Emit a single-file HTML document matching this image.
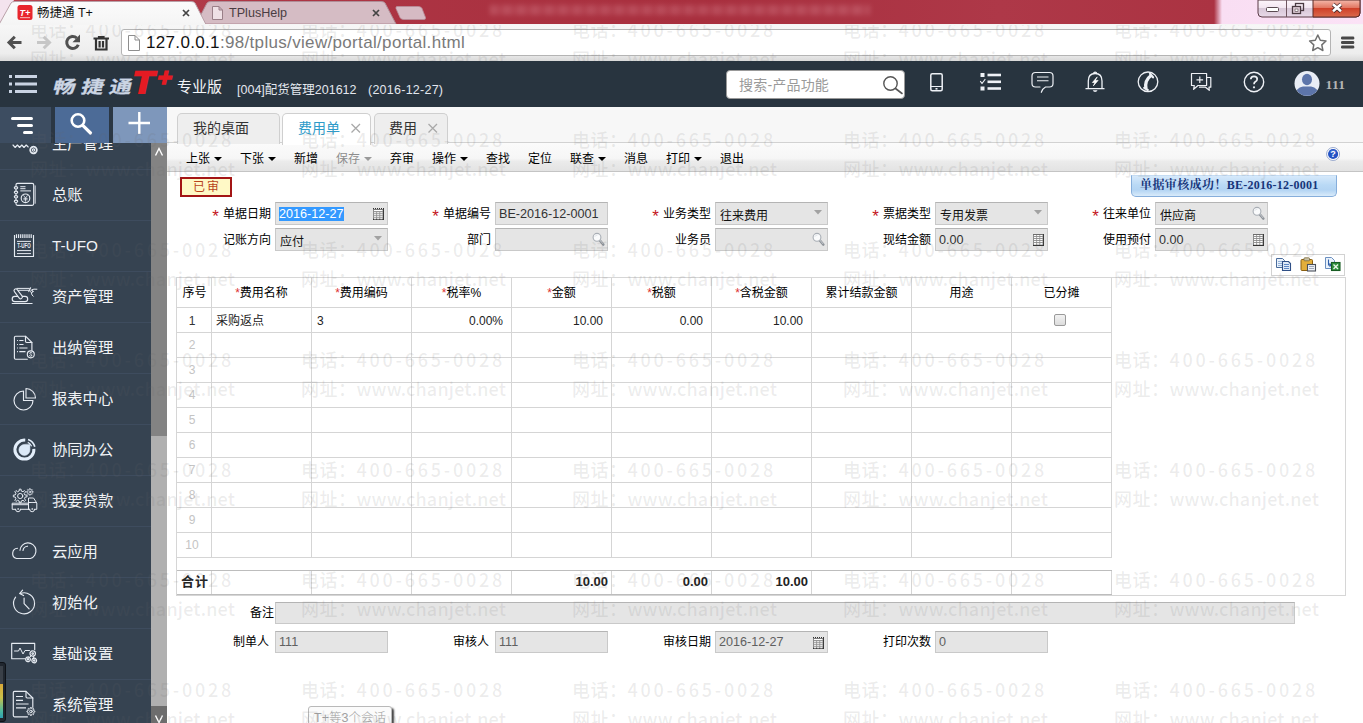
<!DOCTYPE html>
<html lang="zh-CN">
<head>
<meta charset="utf-8">
<title>畅捷通 T+</title>
<style>
*{box-sizing:border-box;margin:0;padding:0}
html,body{width:1363px;height:723px;overflow:hidden;background:#fff}
body{position:relative;font-family:"Liberation Sans","Noto Sans CJK SC",sans-serif;font-size:12px;color:#000}
.abs{position:absolute}
svg{display:block;overflow:visible}
/* ---------- browser chrome ---------- */
#titlebar{z-index:10;left:0;top:0;width:1363px;height:24px;background:linear-gradient(90deg,#b7434f 0,#ad3544 300px,#a82f3e 700px,#ae3848 1000px,#ab3342 1214px,#f9def3 1222px,#fbe2f6 1363px)}
#navbar{left:0;top:24px;width:1363px;height:37px;background:linear-gradient(#f7f7f7,#ededed 80%,#d9d9d9)}
#urlbox{left:121px;top:29px;width:1210px;height:27px;background:#fff;border:1px solid #b4b4b4;border-radius:3px}
#url{left:146px;top:31px;font-size:17px;line-height:23px;color:#7a7a7a;white-space:nowrap;letter-spacing:.33px}
#url b{font-weight:normal;color:#111}
.btab{font-size:13px;line-height:24px;white-space:nowrap}
/* ---------- app header ---------- */
#apphead{z-index:10;left:0;top:61px;width:1363px;height:46px;background:#28343f}
#apphead .t{color:#e4e8ee;white-space:nowrap}
#search{z-index:11;left:726px;top:70px;width:179px;height:29px;background:#fff;border:1px solid #999;border-radius:4px}
/* ---------- sidebar ---------- */
#side{left:0;top:107px;width:151px;height:616px;background:#364351;overflow:hidden}
#sidescroll{left:151px;top:143px;width:16px;height:580px;background:#b0b0b0}
#sidethumb{left:151px;top:143px;width:16px;height:293px;background:#838383}
.sb{position:absolute;top:107px;height:36px}
.mi{position:absolute;left:0;width:151px;height:51px;border-top:1px solid #3e4c5e}
.mi span{position:absolute;left:52px;top:13px;font-size:15.300px;line-height:24px;color:#f1f3f6;white-space:nowrap}
.mi svg{position:absolute;left:10px;top:11px}
/* ---------- content ---------- */
#tabstrip{left:167px;top:107px;width:1196px;height:36px;background:#f7f7f7}
.ptab{position:absolute;top:113px;height:31px;border:1px solid #cfcfcf;border-bottom:none;border-radius:5px 5px 0 0;background:#eeeeee;font-size:14px;line-height:29px;color:#333;white-space:nowrap}
#menubar{left:167px;top:142px;width:1196px;height:30px;background:linear-gradient(#fbfbfb 0,#f6f6f6 55%,#ebebeb 66%,#e3e3e3 100%);border-top:1px solid #d2d2d2;border-bottom:1px solid #c4c4c4}
.m{position:absolute;top:150.500px;font-size:12px;line-height:16px;color:#000;white-space:nowrap}
.m i{display:inline-block;width:0;height:0;border:4px solid transparent;border-top:4px solid #000;border-bottom:0;margin-left:4px;vertical-align:2px}
.lbl{position:absolute;font-size:12px;line-height:16px;white-space:nowrap;text-align:right;width:90px}
.lbl em{font-style:normal;color:#c4161c;margin-right:4px;font-size:17px;line-height:12px;position:relative;top:3.500px;font-weight:normal}
.fld{position:absolute;height:23px;width:113px;background:#e5e5e5;border:1px solid #c9c9c9;border-top-color:#b4b4b4;font-size:12px;line-height:20px;padding-left:4px;padding-top:3px;white-space:nowrap;color:#111}
.fld.ln{font-size:12.600px;color:#333;line-height:22px;padding-top:0;padding-left:3px}
#grid{left:176px;top:277px;width:1170px;height:319px;border:1px solid #d6d6d6;background:#fff}
.vl{position:absolute;width:1px;background:#d5d5d5}
.hl{position:absolute;height:1px;background:#d5d5d5}
.th{position:absolute;top:285px;font-size:12px;line-height:16px;text-align:center;white-space:nowrap}
.th em{font-style:normal;color:#d33}
.td{position:absolute;font-size:12px;line-height:16px;white-space:nowrap;color:#222}
.rn{position:absolute;left:176px;width:32px;text-align:center;font-size:12px;line-height:16px;color:#c4c4c4}
/* watermark */
.wm{position:absolute;font-family:"Noto Sans CJK SC",sans-serif;font-weight:500;font-size:18px;line-height:22px;color:rgba(105,105,105,.12);white-space:nowrap;letter-spacing:.5px;pointer-events:none}
.wm b{font-weight:inherit;letter-spacing:2.75px}
.wm u{text-decoration:none;letter-spacing:.18px}
</style>
</head>
<body>
<!-- browser chrome -->
<div id="titlebar" class="abs"></div>
<div id="navbar" class="abs"></div>
<div id="urlbox" class="abs"></div>
<div id="url" class="abs"><b>127.0.0.1</b>:98/tplus/view/portal/portal.html</div>


<svg class="abs" style="left:0;top:0;z-index:11" width="1363" height="61" viewBox="0 0 1363 61">
  <defs>
    <linearGradient id="tabg" x1="0" y1="0" x2="0" y2="1"><stop offset="0" stop-color="#fbfbfb"/><stop offset="1" stop-color="#f5f5f5"/></linearGradient>
    <linearGradient id="redbtn" x1="0" y1="0" x2="0" y2="1"><stop offset="0" stop-color="#f4b9ab"/><stop offset=".45" stop-color="#e27863"/><stop offset=".5" stop-color="#cf4129"/><stop offset="1" stop-color="#da694c"/></linearGradient>
    <linearGradient id="greybtn" x1="0" y1="0" x2="0" y2="1"><stop offset="0" stop-color="#fdf5fb"/><stop offset=".45" stop-color="#f3e6f1"/><stop offset=".5" stop-color="#d8c7d8"/><stop offset="1" stop-color="#e8d9e8"/></linearGradient>
  </defs>
  <!-- left frame sliver -->
  <path d="M0 0H14L2 24H0Z" fill="#f3e3ee"/>
  <!-- inactive tab 2 -->
  <path d="M196 24 L207 3 Q208 1.500 211 1.500 H381 Q384 1.500 385 3 L396 24 Z" fill="#d5bcc4" stroke="#b08d97" stroke-width="1"/>
  <!-- new tab button -->
  <path d="M397 6.500 H418.500 Q421 6.500 422 8.500 L425.500 17.500 Q426 19.500 424 19.500 H403.500 Q401 19.500 400 17.500 L396 8.500 Q395.500 6.500 397 6.500Z" fill="#d6bac3" stroke="#b88f9b" stroke-width=".8"/>
  <!-- active tab 1 -->
  <path d="M-1 24.500 L11 3 Q12 1.500 15 1.500 H191 Q194 1.500 195 3 L206 24.500 Z" fill="url(#tabg)" stroke="#b9a0a8" stroke-width="1"/>
  <rect x="0" y="24" width="1363" height="1" fill="#f5f5f5"/>
  <!-- favicon -->
  <rect x="17.500" y="5" width="15" height="15" rx="2.500" fill="#e8262d"/>
  <text x="25" y="15.500" font-family="Liberation Sans, sans-serif" font-size="9" font-weight="bold" font-style="italic" fill="#fff" text-anchor="middle">T+</text>
  <rect x="20" y="17" width="10" height="1.200" fill="#f6a3a3"/>
  <text x="37" y="17" font-family="Liberation Sans, Noto Sans CJK SC, sans-serif" font-size="12.500" fill="#111">畅捷通 T+</text>
  <path d="M183 10 L189 16 M189 10 L183 16" stroke="#444" stroke-width="1.700"/>
  <!-- tab2 content -->
  <path d="M212.500 6.500 H219 L222.500 10 V19.500 H212.500 Z M219 6.500 V10 H222.500" fill="#efe0e5" stroke="#9a7f88" stroke-width="1"/>
  <text x="229" y="17" font-family="Liberation Sans, sans-serif" font-size="12.600" fill="#4a3c42">TPlusHelp</text>
  <path d="M373 10 L379 16 M379 10 L373 16" stroke="#444" stroke-width="1.700"/>
  <!-- window controls -->
  <g>
    <path d="M1258 0 H1360 V13 Q1360 17 1356 17 H1262 Q1258 17 1258 13 Z" fill="url(#greybtn)" stroke="#5a3a46" stroke-width="1"/>
    <path d="M1313 0 H1360 V13 Q1360 17 1356 17 H1313 Z" fill="url(#redbtn)" stroke="#5a2a26" stroke-width="1"/>
    <path d="M1286.500 0 V17" stroke="#6f5560" stroke-width="1"/>
    <rect x="1266.500" y="7.500" width="12" height="4" rx="1" fill="#fff" stroke="#5a4a52" stroke-width="1"/>
    <rect x="1295.500" y="3.500" width="8" height="7" fill="none" stroke="#4a3a42" stroke-width="1.300"/>
    <rect x="1292.500" y="6.500" width="8" height="7" fill="#e4d2dc" stroke="#4a3a42" stroke-width="1.300"/>
    <rect x="1295" y="9" width="3" height="2.500" fill="#fff" stroke="#4a3a42" stroke-width=".6"/>
    <path d="M1333 4.300 L1341 11.300 M1341 4.300 L1333 11.300" stroke="#4a2a28" stroke-width="4.200" stroke-linecap="butt"/>
    <path d="M1333 4.300 L1341 11.300 M1341 4.300 L1333 11.300" stroke="#fff" stroke-width="2.600" stroke-linecap="butt"/>
  </g>
  <!-- nav icons -->
  <g fill="none" stroke="#505050" stroke-width="3" stroke-linejoin="miter">
    <path d="M21.500 42.500 H10 M14.800 36.800 L9 42.500 L14.800 48.200"/>
  </g>
  <g fill="none" stroke="#c6c6c6" stroke-width="3">
    <path d="M37 42.500 H48.500 M43.700 36.800 L49.500 42.500 L43.700 48.200"/>
  </g>
  <path d="M76.800 38 A6 6 0 1 0 78.300 44.700" fill="none" stroke="#505050" stroke-width="3"/>
  <path d="M80 34.500 V42.300 H72.500 Z" fill="#505050"/>
  <g fill="none" stroke="#333" stroke-width="2.200">
    <path d="M93.500 38.500 H109 M99 38 V37.200 H103.500 V38"/>
    <path d="M96 39 V49.500 H106.500 V39 M99.600 41 V47.500 M103 41 V47.500"/>
  </g>
  <!-- page icon in url -->
  <path d="M128.500 35.500 H135 L139.500 40 V50.500 H128.500 Z M135 35.500 V40 H139.500" fill="#fff" stroke="#8e8e8e" stroke-width="1"/>
  <!-- star -->
  <path d="M1317.800 35 L1320.300 40.300 L1326 41 L1321.800 44.900 L1322.900 50.500 L1317.800 47.700 L1312.700 50.500 L1313.800 44.900 L1309.600 41 L1315.300 40.300 Z" fill="#fff" stroke="#707070" stroke-width="1.500" stroke-linejoin="round"/>
  <!-- hamburger -->
  <g fill="#484848"><rect x="1341" y="36.500" width="13.300" height="3" rx="1.300"/><rect x="1341" y="41" width="13.300" height="3" rx="1.300"/><rect x="1341" y="45.600" width="13.300" height="3" rx="1.300"/></g>
</svg>

<div class="abs" style="z-index:11;left:490px;top:5px;width:380px;height:10px;filter:blur(2.5px);opacity:.4;background:repeating-linear-gradient(90deg,rgba(255,200,210,.55) 0,rgba(255,200,210,.35) 9px,rgba(255,200,210,.1) 11px,rgba(255,200,210,.5) 14px)"></div>
<!-- app header -->
<div id="apphead" class="abs"></div>

<svg class="abs" style="left:0;top:61px;z-index:11" width="1363" height="46" viewBox="0 61 1363 46">
  <!-- list icon -->
  <g fill="#c9d3e3">
    <rect x="9" y="75" width="3" height="3"/><rect x="15" y="75" width="22" height="3"/>
    <rect x="9" y="82.500" width="3" height="3"/><rect x="15" y="82.500" width="22" height="3"/>
    <rect x="9" y="90" width="3" height="3"/><rect x="15" y="90" width="22" height="3"/>
  </g>
  <g transform="translate(52 92.500) skewX(-14) scale(1.28 1)"><text x="0" y="0" font-family="Liberation Sans, Noto Sans CJK SC, sans-serif" font-size="17.500" font-weight="bold" fill="#cbd5e4" stroke="#cbd5e4" stroke-width=".3" letter-spacing="4.500">畅捷通</text></g>
  <g transform="translate(131 93) skewX(-12) scale(1.12 1)"><text x="0" y="0" font-family="Liberation Sans, sans-serif" font-size="31" font-weight="bold" fill="#e41b23" stroke="#e41b23" stroke-width="2">T</text></g>
  <g transform="translate(156 86) skewX(-12)"><text x="0" y="0" font-family="Liberation Sans, sans-serif" font-size="25" font-weight="bold" fill="#e41b23" stroke="#e41b23" stroke-width="1.600">+</text></g>
  <text x="177" y="91.500" font-family="Liberation Sans, Noto Sans CJK SC, sans-serif" font-size="15" fill="#f2f4f8">专业版</text>
  <text x="237" y="94" font-family="Liberation Sans, Noto Sans CJK SC, sans-serif" font-size="12.500" fill="#e3e7ee">[004]配货管理201612</text>
  <text x="368" y="94" font-family="Liberation Sans, Noto Sans CJK SC, sans-serif" font-size="12.500" fill="#e3e7ee" letter-spacing=".25">(2016-12-27)</text>
</svg>
<div id="search" class="abs"></div>


<div class="abs" style="z-index:12;left:739px;top:74px;font-size:14px;line-height:22px;color:#9a9a9a;white-space:nowrap;letter-spacing:.2px">搜索-产品功能</div>
<svg class="abs" style="left:700px;top:61px;z-index:12" width="663" height="46" viewBox="700 61 663 46" fill="none" stroke="#eef1f6" stroke-width="1.500" stroke-linecap="round" stroke-linejoin="round">
  <!-- magnifier -->
  <circle cx="890.500" cy="83.500" r="6.700" stroke="#555" stroke-width="1.400"/>
  <path d="M895.500 88.500 L902 93.500" stroke="#555" stroke-width="1.600"/>
  <!-- phone -->
  <rect x="930.800" y="73.800" width="11.400" height="17" rx="1.500"/>
  <path d="M931 86.500 H942" stroke-width="1.200"/>
  <rect x="935.500" y="88" width="2" height="1.600" fill="#eef1f6" stroke="none"/>
  <!-- check list -->
  <g fill="#eef1f6" stroke="none">
    <rect x="980.500" y="73" width="4" height="4"/><rect x="987.500" y="73.700" width="13.500" height="2.600"/>
    <rect x="987.500" y="80.500" width="13.500" height="2.600"/>
    <rect x="980.500" y="86.500" width="4" height="4"/><rect x="987.500" y="87.200" width="13.500" height="2.600"/>
  </g>
  <path d="M980.500 81.500 L982 83.500 L985 79.500" stroke-width="1.200"/>
  <!-- message -->
  <path d="M1035.500 72.500 H1049.500 Q1053 72.500 1053 76 V83.500 Q1053 87 1049.500 87 H1045.500 Q1042.500 88.500 1041.300 92.300 M1040 87 H1035.500 Q1032 87 1032 83.500 V76 Q1032 72.500 1035.500 72.500" stroke-width="1.200"/>
  <path d="M1037 77 H1048.500 M1037 80.800 H1048.500" stroke-width="1.100" stroke-linecap="butt"/>
  <!-- bell -->
  <path d="M1086 88.700 H1104 M1088.300 88.500 V81 Q1088.300 73.500 1095.100 73.500 Q1102 73.500 1102 81 V88.500" stroke-width="1.300"/>
  <path d="M1093.800 72.800 Q1095.100 71.600 1096.500 72.800" stroke-width="1.200"/>
  <path d="M1092.800 90.300 H1097.500 Q1097 92 1095.100 92 Q1093.300 92 1092.800 90.300 Z" fill="#eef1f6" stroke="none"/>
  <path d="M1097 77.200 L1092.400 82.500 H1094.900 L1093.400 85.800 L1098.100 80.400 H1095.500 Z" fill="#fff" stroke="#fff" stroke-width=".7" stroke-linejoin="miter"/>
  <!-- call circle -->
  <circle cx="1148" cy="81.800" r="9.800" stroke-width="1.300"/>
  <path d="M1151.300 75.300 Q1144.300 80.500 1146 88.800" stroke-width="3.300" stroke-linecap="butt"/>
  <path d="M1150 73.800 L1153 77.300 M1144.200 87.800 L1147.800 90" stroke-width="2.200" stroke-linecap="round"/>
    <!-- chat plus -->
  <path d="M1206.600 77.500 H1210.800 V87.200 H1209 L1209.300 90.300 L1205.500 87.200 H1199.500" stroke-width="1.200"/>
  <path d="M1191.500 73.500 H1206.600 V85.500 H1198 L1193.600 89.300 L1194.300 85.500 H1191.500 Z" stroke-width="1.200" fill="#28343f"/>
  <path d="M1196.500 79.800 H1203.100 M1199.800 76.500 V83.100" stroke-width="1.200" stroke-linecap="butt"/>
  <!-- help -->
  <circle cx="1254" cy="82" r="9.700" stroke-width="1.400"/>
  <path d="M1250.800 79.300 Q1250.800 76.300 1254 76.300 Q1257.200 76.300 1257.200 79 Q1257.200 80.800 1255.300 81.800 Q1254 82.600 1254 84.300" stroke-width="1.700" stroke-linecap="butt"/>
  <circle cx="1254" cy="87.300" r="1.100" fill="#eef1f6" stroke="none"/>
  <!-- avatar -->
  <clipPath id="avc"><circle cx="1307" cy="83.500" r="12.300"/></clipPath>
  <circle cx="1307" cy="83.500" r="12.500" fill="#e9edf5" stroke="none"/>
  <g clip-path="url(#avc)" fill="#5d75aa" stroke="none">
    <ellipse cx="1307" cy="79.500" rx="5" ry="5.800"/>
    <path d="M1294 98 Q1295 88 1303 86.500 H1311 Q1319 88 1320 98 Z"/>
  </g>
  <text x="1325.500" y="88.500" font-family="Liberation Serif, serif" font-size="13.500" font-weight="bold" fill="#b5b5b5" stroke="none" letter-spacing=".4">111</text>
</svg>

<!-- sidebar -->
<div id="side" class="abs">
<div class="mi" style="top:11px"><svg width="30" height="30" viewBox="0 0 30 30" fill="none" stroke="#e6ebf2" stroke-width="1.150" stroke-linecap="round" stroke-linejoin="round"><path d="M3 15 l2.200 2.500 l2.200 -2.500 l2.200 2.500 l2.200 -2.500 l2.200 2.500 l2.200 -2.500 l2 2" /><circle cx="23.500" cy="20" r="3.300" stroke-dasharray="1.700 1" stroke-width="1.800"/><circle cx="23.500" cy="20" r="1.200"/></svg><span>生产管理</span></div>
<div class="mi" style="top:62px"><svg width="30" height="30" viewBox="0 0 30 30" fill="none" stroke="#e6ebf2" stroke-width="1.150" stroke-linecap="round" stroke-linejoin="round"><g transform="translate(0 -1.200)"><rect x="6" y="3.500" width="17.700" height="22" rx="1.500"/><path d="M25.200 6 V23.500" stroke-width=".9"/><ellipse cx="6" cy="8" rx="1.700" ry="1.200" fill="#364351"/><ellipse cx="6" cy="12.500" rx="1.700" ry="1.200" fill="#364351"/><ellipse cx="6" cy="17" rx="1.700" ry="1.200" fill="#364351"/><ellipse cx="6" cy="21.500" rx="1.700" ry="1.200" fill="#364351"/><path d="M10.300 6.900 H15.500 M10.300 8.900 H15.500 M10.300 11.100 H21" stroke-width="1" stroke-linecap="butt"/><circle cx="15.500" cy="18.500" r="4.300"/><path d="M13.700 15.800 L15.500 18.300 L17.300 15.800 M15.500 18.300 V21.500 M13.800 18.600 H17.200 M13.800 20 H17.200" stroke-width=".8"/></g></svg><span>总账</span></div>
<div class="mi" style="top:113px"><svg width="30" height="30" viewBox="0 0 30 30" fill="none" stroke="#e6ebf2" stroke-width="1.150" stroke-linecap="round" stroke-linejoin="round"><path d="M4.500 3 V24.500 H23.500 V3" stroke-linecap="butt"/><path d="M6.5 2.300 V6 M8.6 2.300 V6 M10.7 2.300 V6 M12.8 2.300 V6 M14.9 2.300 V6 M17.0 2.300 V6 M19.1 2.300 V6 M21.2 2.300 V6" stroke-width="1.200" stroke-linecap="butt"/><path d="M7 9.400 H21 M7 18.600 H21 M7 21.600 H21" stroke-width="1" stroke-linecap="butt"/><text x="14" y="16.400" font-family="Liberation Sans, sans-serif" font-size="6.500" font-weight="bold" fill="#e6ebf2" stroke="none" text-anchor="middle" textLength="13.500" lengthAdjust="spacingAndGlyphs">T-UFO</text></svg><span>T-UFO</span></div>
<div class="mi" style="top:164px"><svg width="30" height="30" viewBox="0 0 30 30" fill="none" stroke="#e6ebf2" stroke-width="1.150" stroke-linecap="round" stroke-linejoin="round"><path d="M2.200 20.500 H22.100"/><rect x="2.200" y="13.300" width="15.500" height="5.300" rx="2.650"/><path d="M5.800 7.600 L10.600 14" stroke-width="4.600"/><path d="M5.800 7.600 L10.600 14" stroke="#364351" stroke-width="2.400"/><path d="M7 5.400 H19.400 M8.500 7.300 H19" stroke-width="1"/><path d="M18.800 8.600 L20.600 4.800"/><circle cx="21.800" cy="8.400" r="1.200" stroke-width="1"/><path d="M22 6.600 Q23.500 5.800 26.900 6.200" stroke-width="1"/><path d="M21.400 10.200 Q21.600 12.300 23.200 13.300" stroke-width="1"/></svg><span>资产管理</span></div>
<div class="mi" style="top:215px"><svg width="30" height="30" viewBox="0 0 30 30" fill="none" stroke="#e6ebf2" stroke-width="1.150" stroke-linecap="round" stroke-linejoin="round"><path d="M17.300 25.200 H5.600 Q4.400 25.200 4.400 24 V3.400 Q4.400 2.200 5.600 2.200 H15.500 L21.900 8.500 V16.400"/><path d="M15.500 2.200 V7.300 Q15.500 8.500 16.700 8.500 H21.900"/><path d="M7.100 6.500 H8 M9.300 6.500 H13.500 M7.100 10.500 H8 M9.300 10.500 H13.500 M7.100 14 H8 M9.300 14 H17.500 M7.100 17.600 H8 M9.300 17.600 H15.500" stroke-width="1.100" stroke-linecap="butt"/><circle cx="20.800" cy="20.300" r="3.500" fill="#364351"/><path d="M22 18.900 Q20.800 18 19.900 18.800 Q19.300 19.800 20.800 20.300 Q22.300 20.900 21.700 21.900 Q20.800 22.700 19.500 21.700" stroke-width=".9"/></svg><span>出纳管理</span></div>
<div class="mi" style="top:266px"><svg width="30" height="30" viewBox="0 0 30 30" fill="none" stroke="#e6ebf2" stroke-width="1.150" stroke-linecap="round" stroke-linejoin="round"><path d="M13.500 6 A9.500 9.500 0 1 0 23 15.500 H13.500 Z"/><path d="M16 3.500 A9.500 9.500 0 0 1 25.500 13 H16 Z"/></svg><span>报表中心</span></div>
<div class="mi" style="top:317px"><svg width="30" height="30" viewBox="0 0 30 30" fill="none" stroke="#e6ebf2" stroke-width="1.150" stroke-linecap="round" stroke-linejoin="round"><path d="M19.900 8.400 L19.900 13.900 A5.500 5.500 0 1 1 14.400 8.400 Z" fill="#dbe9f8" stroke="#dbe9f8" stroke-width=".6"/><path d="M23.860 12.770 A9.500 9.500 0 1 1 15.230 4.140" stroke="#e3eefa" stroke-width="3" stroke-linecap="butt"/><path d="M18.090 3.450 A10.800 10.800 0 0 1 24.830 10.800" stroke="#e3eefa" stroke-width="1.700" stroke-linecap="butt"/><path d="M17.780 6.350 A8 8 0 0 1 21.650 10.220" stroke="#e3eefa" stroke-width="1.100" stroke-linecap="butt"/></svg><span>协同办公</span></div>
<div class="mi" style="top:368px"><svg width="30" height="30" viewBox="0 0 30 30" fill="none" stroke="#e6ebf2" stroke-width="1.150" stroke-linecap="round" stroke-linejoin="round"><path d="M15.19 7.97 L17.05 8.14 L17.05 9.86 L15.19 10.03 L14.46 11.80 L15.65 13.23 L14.43 14.45 L13.00 13.26 L11.23 13.99 L11.06 15.85 L9.34 15.85 L9.17 13.99 L7.40 13.26 L5.97 14.45 L4.75 13.23 L5.94 11.80 L5.21 10.03 L3.35 9.86 L3.35 8.14 L5.21 7.97 L5.94 6.20 L4.75 4.77 L5.97 3.55 L7.40 4.74 L9.17 4.01 L9.34 2.15 L11.06 2.15 L11.23 4.01 L13.00 4.74 L14.43 3.55 L15.65 4.77 L14.46 6.20 Z" stroke-width="1"/><circle cx="10.200" cy="9" r="2.600" stroke-width="1"/><path d="M22.25 4.41 L23.17 4.49 L23.17 5.31 L22.25 5.39 L21.91 6.22 L22.51 6.92 L21.92 7.51 L21.22 6.91 L20.39 7.25 L20.31 8.17 L19.49 8.17 L19.41 7.25 L18.58 6.91 L17.88 7.51 L17.29 6.92 L17.89 6.22 L17.55 5.39 L16.63 5.31 L16.63 4.49 L17.55 4.41 L17.89 3.58 L17.29 2.88 L17.88 2.29 L18.58 2.89 L19.41 2.55 L19.49 1.63 L20.31 1.63 L20.39 2.55 L21.22 2.89 L21.92 2.29 L22.51 2.88 L21.91 3.58 Z" stroke-width=".8"/><circle cx="19.900" cy="4.900" r=".900" stroke-width=".8"/><path d="M5.500 22.300 H2.200 V16.200 H18.500 M10.500 22.300 H18.500 M2.200 17.700 H18.500" stroke-width="1"/><path d="M18.500 22.300 V11 H23.500 L26.800 16 V22.300 H24.600 M19.600 22.300 H18.500 M18.500 15.500 H26.300" stroke-width="1"/><path d="M5.500 22.300 A2.500 2.500 0 0 0 10.500 22.300 M19.600 22.300 A2.500 2.500 0 0 0 24.600 22.300" stroke-width="1"/><circle cx="8" cy="22" r=".5" stroke-width=".7"/><circle cx="22.100" cy="22" r=".5" stroke-width=".7"/></svg><span>我要贷款</span></div>
<div class="mi" style="top:419px"><svg width="30" height="30" viewBox="0 0 30 30" fill="none" stroke="#e6ebf2" stroke-width="1.150" stroke-linecap="round" stroke-linejoin="round"><path d="M7.500 10.300 A5.200 5.200 0 0 0 6.500 20.500 H20.500 A8 8 0 1 0 10 12.200"/><path d="M13 12.500 A5 5 0 0 1 17.500 8.200"/></svg><span>云应用</span></div>
<div class="mi" style="top:470px"><svg width="30" height="30" viewBox="0 0 30 30" fill="none" stroke="#e6ebf2" stroke-width="1.150" stroke-linecap="round" stroke-linejoin="round"><g transform="translate(-.4 -1.400)"><path d="M11 5.800 A10.500 10.500 0 1 1 6 9.500"/><path d="M13 2.500 L10 6 L14 8"/><path d="M14.500 10.500 V16 L19.500 21.300"/></g></svg><span>初始化</span></div>
<div class="mi" style="top:521px"><svg width="30" height="30" viewBox="0 0 30 30" fill="none" stroke="#e6ebf2" stroke-width="1.150" stroke-linecap="round" stroke-linejoin="round"><path d="M15 18.700 H1.700 V3.400 H24.700 V9.700"/><path d="M4.500 11 H8.500 L10 8 L13 14 L15 10.500 H19.500" stroke-width="1"/><circle cx="22.700" cy="13.500" r="2.700" stroke-dasharray="1.400 .7" stroke-width="1.300"/><circle cx="18" cy="19.300" r="2.300" stroke-dasharray="1.300 .7" stroke-width="1.300"/><circle cx="24.200" cy="20.500" r="2.300" stroke-dasharray="1.300 .7" stroke-width="1.300"/><path d="M21.300 15.800 L19.300 17.500 M23.300 16.200 L23.900 18.200" stroke-width="1"/><circle cx="22.700" cy="13.500" r=".8"/><circle cx="18" cy="19.300" r=".7"/><circle cx="24.200" cy="20.500" r=".7"/></svg><span>基础设置</span></div>
<div class="mi" style="top:572px"><svg width="30" height="30" viewBox="0 0 30 30" fill="none" stroke="#e6ebf2" stroke-width="1.150" stroke-linecap="round" stroke-linejoin="round"><path d="M17.500 25.800 H4.500 Q3.300 25.800 3.300 24.600 V1.500 Q3.300 .3 4.500 .3 H16 L22.800 7 V16.300"/><path d="M16 .3 V5.800 Q16 7 17.200 7 H22.800"/><path d="M6 5.500 H13 M6 9.300 H13 M6 13 H18.600 M6 16.900 H16" stroke-width="1.200" stroke-linecap="butt"/><path d="M23.83 19.85 L24.86 19.97 L24.86 21.03 L23.83 21.15 L23.43 22.11 L24.08 22.93 L23.33 23.68 L22.51 23.03 L21.55 23.43 L21.43 24.46 L20.37 24.46 L20.25 23.43 L19.29 23.03 L18.47 23.68 L17.72 22.93 L18.37 22.11 L17.97 21.15 L16.94 21.03 L16.94 19.97 L17.97 19.85 L18.37 18.89 L17.72 18.07 L18.47 17.32 L19.29 17.97 L20.25 17.57 L20.37 16.54 L21.43 16.54 L21.55 17.57 L22.51 17.97 L23.33 17.32 L24.08 18.07 L23.43 18.89 Z" stroke-width="1" fill="#364351"/><circle cx="20.900" cy="20.500" r="1.300" stroke-width="1"/></svg><span>系统管理</span></div>
</div>
<div class="abs" style="left:0;top:107px;width:167px;height:36px;background:#2b3744"></div>
<div class="sb" style="left:0;width:51px;background:#3d4d61"></div>
<div class="sb" style="left:55px;width:54px;background:#4c6b97"></div>
<div class="sb" style="left:113px;width:54px;background:#7e97bb"></div>
<svg class="abs" style="left:0;top:107px" width="167" height="36" viewBox="0 107 167 36" fill="none" stroke="#fff" stroke-linecap="round">
  <path d="M12.500 118.500 H31.500 M18.500 125.500 H31.500 M24.500 132.500 H31.500" stroke-width="3"/>
  <circle cx="78" cy="120.500" r="6.300" stroke-width="2.600"/>
  <path d="M83 125.700 L90.500 133" stroke-width="3.200"/>
  <path d="M128.500 123 H150 M139.300 112 V134" stroke-width="2.400" stroke-linecap="butt"/>
</svg>
<div id="sidescroll" class="abs"></div>
<div id="sidethumb" class="abs"></div>
<div class="abs" style="left:151px;top:706px;width:16px;height:17px;background:#6d6d6d"></div>
<svg class="abs" style="left:151px;top:143px" width="16" height="580" viewBox="0 0 16 580" fill="none" stroke="#fff" stroke-width="1.400"><path d="M4.500 12.500 L8 5.500 L11.500 12.500"/><path d="M4.500 572.500 L8 579.500 L11.500 572.500"/></svg>

<!-- content -->
<div id="tabstrip" class="abs"></div>
<div id="menubar" class="abs"></div>
<div id="grid" class="abs"></div>
<div class="vl" style="left:211px;top:278px;height:280px"></div>
<div class="vl" style="left:211px;top:571px;height:23px"></div>
<div class="vl" style="left:311px;top:278px;height:280px"></div>
<div class="vl" style="left:311px;top:571px;height:23px"></div>
<div class="vl" style="left:411px;top:278px;height:280px"></div>
<div class="vl" style="left:411px;top:571px;height:23px"></div>
<div class="vl" style="left:511px;top:278px;height:280px"></div>
<div class="vl" style="left:511px;top:571px;height:23px"></div>
<div class="vl" style="left:611px;top:278px;height:280px"></div>
<div class="vl" style="left:611px;top:571px;height:23px"></div>
<div class="vl" style="left:711px;top:278px;height:280px"></div>
<div class="vl" style="left:711px;top:571px;height:23px"></div>
<div class="vl" style="left:811px;top:278px;height:280px"></div>
<div class="vl" style="left:811px;top:571px;height:23px"></div>
<div class="vl" style="left:911px;top:278px;height:280px"></div>
<div class="vl" style="left:911px;top:571px;height:23px"></div>
<div class="vl" style="left:1011px;top:278px;height:280px"></div>
<div class="vl" style="left:1011px;top:571px;height:23px"></div>
<div class="vl" style="left:1111px;top:278px;height:280px"></div>
<div class="vl" style="left:1111px;top:571px;height:23px"></div>
<div class="hl" style="left:177px;top:307px;width:935px"></div>
<div class="hl" style="left:177px;top:332px;width:935px"></div>
<div class="hl" style="left:177px;top:357px;width:935px"></div>
<div class="hl" style="left:177px;top:382px;width:935px"></div>
<div class="hl" style="left:177px;top:407px;width:935px"></div>
<div class="hl" style="left:177px;top:432px;width:935px"></div>
<div class="hl" style="left:177px;top:457px;width:935px"></div>
<div class="hl" style="left:177px;top:482px;width:935px"></div>
<div class="hl" style="left:177px;top:507px;width:935px"></div>
<div class="hl" style="left:177px;top:532px;width:935px"></div>
<div class="hl" style="left:177px;top:557px;width:935px"></div>
<div class="hl" style="left:177px;top:570px;width:935px;background:#bdbdbd"></div>
<div class="hl" style="left:177px;top:594px;width:935px;background:#bdbdbd"></div>
<div class="th" style="left:177px;width:35px">序号</div>
<div class="th" style="left:211px;width:101px"><em>*</em>费用名称</div>
<div class="th" style="left:311px;width:101px"><em>*</em>费用编码</div>
<div class="th" style="left:411px;width:101px"><em>*</em>税率%</div>
<div class="th" style="left:511px;width:101px"><em>*</em>金额</div>
<div class="th" style="left:611px;width:101px"><em>*</em>税额</div>
<div class="th" style="left:711px;width:101px"><em>*</em>含税金额</div>
<div class="th" style="left:811px;width:101px">累计结款金额</div>
<div class="th" style="left:911px;width:101px">用途</div>
<div class="th" style="left:1011px;width:101px">已分摊</div>
<div class="rn" style="top:313px;color:#333;">1</div>
<div class="rn" style="top:337px;">2</div>
<div class="rn" style="top:362px;">3</div>
<div class="rn" style="top:387px;">4</div>
<div class="rn" style="top:412px;">5</div>
<div class="rn" style="top:437px;">6</div>
<div class="rn" style="top:462px;">7</div>
<div class="rn" style="top:487px;">8</div>
<div class="rn" style="top:512px;">9</div>
<div class="rn" style="top:537px;">10</div>
<div class="td" style="left:216px;top:313px">采购返点</div>
<div class="td" style="left:317px;top:313px">3</div>
<div class="td" style="left:411px;top:313px;width:92px;text-align:right">0.00%</div>
<div class="td" style="left:511px;top:313px;width:92px;text-align:right">10.00</div>
<div class="td" style="left:611px;top:313px;width:92px;text-align:right">0.00</div>
<div class="td" style="left:711px;top:313px;width:92px;text-align:right">10.00</div>
<div class="abs" style="left:1054px;top:314px;width:12px;height:12px;border:1px solid #9a9a9a;border-radius:2px;background:linear-gradient(#f2f2f2,#dcdcdc)"></div>
<div class="td" style="left:181px;top:574px;font-weight:bold;font-size:13px;letter-spacing:1px">合计</div>
<div class="td" style="left:511px;top:574px;width:97px;text-align:right;font-weight:bold;font-size:13px">10.00</div>
<div class="td" style="left:611px;top:574px;width:97px;text-align:right;font-weight:bold;font-size:13px">0.00</div>
<div class="td" style="left:711px;top:574px;width:97px;text-align:right;font-weight:bold;font-size:13px">10.00</div>
<div class="ptab" style="left:177px;width:103px;padding-left:15px">我的桌面</div>
<div class="ptab" style="left:282px;width:89px;padding-left:15px;background:#fff;color:#2f9bc9;height:32px">费用单</div>
<div class="ptab" style="left:374px;width:74px;padding-left:14px">费用</div>
<svg class="abs" style="left:350px;top:122px" width="90" height="12" viewBox="350 122 90 12" stroke="#a9a9a9" stroke-width="1.300" fill="none"><path d="M351.500 124 L360 132.500 M360 124 L351.500 132.500"/><path d="M428.500 124 L437 132.500 M437 124 L428.500 132.500"/></svg>
<div class="m" style="left:186px;">上张<i></i></div>
<div class="m" style="left:240px;">下张<i></i></div>
<div class="m" style="left:294px;">新增</div>
<div class="m" style="left:336px;color:#8d8d8d;">保存<i style="border-top-color:#9a9a9a"></i></div>
<div class="m" style="left:390px;">弃审</div>
<div class="m" style="left:432px;">操作<i></i></div>
<div class="m" style="left:486px;">查找</div>
<div class="m" style="left:528px;">定位</div>
<div class="m" style="left:570px;">联查<i></i></div>
<div class="m" style="left:624px;">消息</div>
<div class="m" style="left:666px;">打印<i></i></div>
<div class="m" style="left:720px;">退出</div>
<svg class="abs" style="left:1326px;top:147px" width="14" height="14" viewBox="0 0 14 14"><circle cx="7.100" cy="7" r="6.500" fill="#fff" stroke="#8fa0c8" stroke-width=".9"/><circle cx="7.100" cy="7" r="5.100" fill="#2453c4"/><path d="M3.500 5 A4.500 4.500 0 0 1 10.500 4.500 Q7 5.500 3.500 5Z" fill="#4f7ddc" opacity=".7"/><text x="7.100" y="10.300" font-family="Liberation Sans, sans-serif" font-size="9" font-weight="bold" fill="#fff" text-anchor="middle">?</text></svg>
<div class="abs" style="left:180px;top:177px;width:52px;height:20px;border:2px solid #a31515;background:#fff9c6;color:#b8431c;font-size:12px;line-height:17px;text-align:center;letter-spacing:2px;padding-left:2px">已审</div>
<div class="abs" style="left:1131px;top:175px;width:206px;height:22px;background:linear-gradient(#d6e9fb,#b9d9f5 45%,#b3d4f3 70%,#d9ebfa);border:1px solid #86aedb;border-top:1px solid #c5dcf3;border-radius:0 0 5px 5px;font-family:'Liberation Serif','Noto Serif CJK SC',serif;font-weight:bold;font-size:12px;line-height:18px;color:#17357a;padding-left:8px;white-space:nowrap;letter-spacing:.4px">单据审核成功<span style="letter-spacing:.25px">！BE-2016-12-0001</span></div>
<div class="lbl" style="left:181px;top:206px"><em>*</em>单据日期</div>
<div class="fld ln" style="left:275px;top:202px"><span style="background:#3399ff;color:#fff;display:inline-block;font-size:12.600px;line-height:14px;padding:0 1px 0 0;margin-left:0;vertical-align:top;margin-top:4px;letter-spacing:0">2016-12-27</span><svg class="abs" style="right:3px;top:5px" width="11" height="12" viewBox="0 0 11 12"><rect x="0" y="0" width="11" height="12" fill="#8c8c8c"/><rect x="0" y="0" width="11" height="1.200" fill="#333"/><rect x="1" y="0" width="1" height="1" fill="#e6e6e6"/><rect x="3" y="0" width="1" height="1" fill="#e6e6e6"/><rect x="5" y="0" width="1" height="1" fill="#e6e6e6"/><rect x="7" y="0" width="1" height="1" fill="#e6e6e6"/><rect x="9" y="0" width="1" height="1" fill="#e6e6e6"/><rect x="10" y="1" width="1" height="11" fill="#3c3c3c"/><rect x="0" y="10.800" width="11" height="1.200" fill="#333"/><rect x="1" y="2" width="8.500" height="1.100" fill="#fff"/><rect x="1" y="4.2" width="2.300" height="1.100" fill="#fff"/><rect x="4.1" y="4.2" width="2.300" height="1.100" fill="#fff"/><rect x="7.2" y="4.2" width="2.300" height="1.100" fill="#fff"/><rect x="1" y="6.2" width="2.300" height="1.100" fill="#fff"/><rect x="4.1" y="6.2" width="2.300" height="1.100" fill="#fff"/><rect x="7.2" y="6.2" width="2.300" height="1.100" fill="#fff"/><rect x="1" y="8.2" width="2.300" height="1.100" fill="#fff"/><rect x="4.1" y="8.2" width="2.300" height="1.100" fill="#fff"/><rect x="7.2" y="8.2" width="2.300" height="1.100" fill="#fff"/><rect x="1" y="10.2" width="2.300" height="1.100" fill="#fff"/><rect x="4.1" y="10.2" width="2.300" height="1.100" fill="#fff"/><rect x="7.2" y="10.2" width="2.300" height="1.100" fill="#fff"/></svg></div>
<div class="lbl" style="left:401px;top:206px"><em>*</em>单据编号</div>
<div class="fld ln" style="left:495px;top:202px">BE-2016-12-0001</div>
<div class="lbl" style="left:621px;top:206px"><em>*</em>业务类型</div>
<div class="fld" style="left:715px;top:202px">往来费用<svg class="abs" style="right:5px;top:7px" width="8" height="4.500" viewBox="0 0 8 4.500"><path d="M0 0 H8 L4 4.500 Z" fill="#a2a2a2"/></svg></div>
<div class="lbl" style="left:841px;top:206px"><em>*</em>票据类型</div>
<div class="fld" style="left:935px;top:202px">专用发票<svg class="abs" style="right:5px;top:7px" width="8" height="4.500" viewBox="0 0 8 4.500"><path d="M0 0 H8 L4 4.500 Z" fill="#a2a2a2"/></svg></div>
<div class="lbl" style="left:1061px;top:206px"><em>*</em>往来单位</div>
<div class="fld" style="left:1155px;top:202px">供应商<svg class="abs" style="right:2px;top:3px" width="16" height="16" viewBox="0 0 16 16"><path d="M10.500 8 L14.300 12.500" stroke="#8d9298" stroke-width="2.600" stroke-linecap="round"/><path d="M10.800 8 L14 11.800" stroke="#c9cdd2" stroke-width="1" stroke-linecap="round"/><circle cx="8" cy="5.300" r="3.900" fill="#fafbfc" stroke="#a9aeb5" stroke-width="1.100"/><path d="M5.800 4.800 Q6.500 3 8.500 3" stroke="#dfe3e8" stroke-width="1" fill="none"/></svg></div>
<div class="lbl" style="left:181px;top:232px">记账方向</div>
<div class="fld" style="left:275px;top:228px">应付<svg class="abs" style="right:5px;top:7px" width="8" height="4.500" viewBox="0 0 8 4.500"><path d="M0 0 H8 L4 4.500 Z" fill="#a2a2a2"/></svg></div>
<div class="lbl" style="left:401px;top:232px">部门</div>
<div class="fld" style="left:495px;top:228px"><svg class="abs" style="right:2px;top:3px" width="16" height="16" viewBox="0 0 16 16"><path d="M10.500 8 L14.300 12.500" stroke="#8d9298" stroke-width="2.600" stroke-linecap="round"/><path d="M10.800 8 L14 11.800" stroke="#c9cdd2" stroke-width="1" stroke-linecap="round"/><circle cx="8" cy="5.300" r="3.900" fill="#fafbfc" stroke="#a9aeb5" stroke-width="1.100"/><path d="M5.800 4.800 Q6.500 3 8.500 3" stroke="#dfe3e8" stroke-width="1" fill="none"/></svg></div>
<div class="lbl" style="left:621px;top:232px">业务员</div>
<div class="fld" style="left:715px;top:228px"><svg class="abs" style="right:2px;top:3px" width="16" height="16" viewBox="0 0 16 16"><path d="M10.500 8 L14.300 12.500" stroke="#8d9298" stroke-width="2.600" stroke-linecap="round"/><path d="M10.800 8 L14 11.800" stroke="#c9cdd2" stroke-width="1" stroke-linecap="round"/><circle cx="8" cy="5.300" r="3.900" fill="#fafbfc" stroke="#a9aeb5" stroke-width="1.100"/><path d="M5.800 4.800 Q6.500 3 8.500 3" stroke="#dfe3e8" stroke-width="1" fill="none"/></svg></div>
<div class="lbl" style="left:841px;top:232px">现结金额</div>
<div class="fld ln" style="left:935px;top:228px">0.00<svg class="abs" style="right:3px;top:5px" width="11" height="12" viewBox="0 0 11 12"><rect x="0" y="0" width="11" height="12" fill="#8c8c8c"/><rect x="0" y="0" width="11" height=".8" fill="#666"/><rect x="10" y="0" width="1" height="12" fill="#3c3c3c"/><rect x="0" y="10.900" width="11" height="1.100" fill="#333"/><rect x="1" y="1" width="2.300" height="1.1" fill="#fff"/><rect x="4.1" y="1" width="2.300" height="1.1" fill="#fff"/><rect x="7.2" y="1" width="2.300" height="1.1" fill="#fff"/><rect x="1" y="3" width="2.300" height="1.1" fill="#fff"/><rect x="4.1" y="3" width="2.300" height="1.1" fill="#fff"/><rect x="7.2" y="3" width="2.300" height="1.1" fill="#fff"/><rect x="1" y="5" width="2.300" height="1.1" fill="#fff"/><rect x="4.1" y="5" width="2.300" height="1.1" fill="#fff"/><rect x="7.2" y="5" width="2.300" height="1.1" fill="#fff"/><rect x="1" y="7" width="2.300" height="1.1" fill="#fff"/><rect x="4.1" y="7" width="2.300" height="1.1" fill="#fff"/><rect x="7.2" y="7" width="2.300" height="1.1" fill="#fff"/><rect x="1" y="9" width="2.300" height="1.7" fill="#fff"/><rect x="4.1" y="9" width="2.300" height="1.7" fill="#fff"/><rect x="7.2" y="9" width="2.300" height="1.7" fill="#fff"/></svg></div>
<div class="lbl" style="left:1061px;top:232px">使用预付</div>
<div class="fld ln" style="left:1155px;top:228px">0.00<svg class="abs" style="right:3px;top:5px" width="11" height="12" viewBox="0 0 11 12"><rect x="0" y="0" width="11" height="12" fill="#8c8c8c"/><rect x="0" y="0" width="11" height=".8" fill="#666"/><rect x="10" y="0" width="1" height="12" fill="#3c3c3c"/><rect x="0" y="10.900" width="11" height="1.100" fill="#333"/><rect x="1" y="1" width="2.300" height="1.1" fill="#fff"/><rect x="4.1" y="1" width="2.300" height="1.1" fill="#fff"/><rect x="7.2" y="1" width="2.300" height="1.1" fill="#fff"/><rect x="1" y="3" width="2.300" height="1.1" fill="#fff"/><rect x="4.1" y="3" width="2.300" height="1.1" fill="#fff"/><rect x="7.2" y="3" width="2.300" height="1.1" fill="#fff"/><rect x="1" y="5" width="2.300" height="1.1" fill="#fff"/><rect x="4.1" y="5" width="2.300" height="1.1" fill="#fff"/><rect x="7.2" y="5" width="2.300" height="1.1" fill="#fff"/><rect x="1" y="7" width="2.300" height="1.1" fill="#fff"/><rect x="4.1" y="7" width="2.300" height="1.1" fill="#fff"/><rect x="7.2" y="7" width="2.300" height="1.1" fill="#fff"/><rect x="1" y="9" width="2.300" height="1.7" fill="#fff"/><rect x="4.1" y="9" width="2.300" height="1.7" fill="#fff"/><rect x="7.2" y="9" width="2.300" height="1.7" fill="#fff"/></svg></div>
<div class="lbl" style="left:184px;top:605px">备注</div>
<div class="fld" style="left:275px;top:602px;width:1020px;height:22px"></div>
<div class="lbl" style="left:179px;top:634px">制单人</div>
<div class="fld ln" style="left:275px;top:631px;height:22px;color:#606060;line-height:21px">111</div>
<div class="lbl" style="left:399px;top:634px">审核人</div>
<div class="fld ln" style="left:495px;top:631px;height:22px;color:#606060;line-height:21px">111</div>
<div class="lbl" style="left:621px;top:634px">审核日期</div>
<div class="fld ln" style="left:715px;top:631px;height:22px;color:#606060;line-height:21px">2016-12-27<svg class="abs" style="right:3px;top:5px" width="11" height="12" viewBox="0 0 11 12"><rect x="0" y="0" width="11" height="12" fill="#8c8c8c"/><rect x="0" y="0" width="11" height="1.200" fill="#333"/><rect x="1" y="0" width="1" height="1" fill="#e6e6e6"/><rect x="3" y="0" width="1" height="1" fill="#e6e6e6"/><rect x="5" y="0" width="1" height="1" fill="#e6e6e6"/><rect x="7" y="0" width="1" height="1" fill="#e6e6e6"/><rect x="9" y="0" width="1" height="1" fill="#e6e6e6"/><rect x="10" y="1" width="1" height="11" fill="#3c3c3c"/><rect x="0" y="10.800" width="11" height="1.200" fill="#333"/><rect x="1" y="2" width="8.500" height="1.100" fill="#fff"/><rect x="1" y="4.2" width="2.300" height="1.100" fill="#fff"/><rect x="4.1" y="4.2" width="2.300" height="1.100" fill="#fff"/><rect x="7.2" y="4.2" width="2.300" height="1.100" fill="#fff"/><rect x="1" y="6.2" width="2.300" height="1.100" fill="#fff"/><rect x="4.1" y="6.2" width="2.300" height="1.100" fill="#fff"/><rect x="7.2" y="6.2" width="2.300" height="1.100" fill="#fff"/><rect x="1" y="8.2" width="2.300" height="1.100" fill="#fff"/><rect x="4.1" y="8.2" width="2.300" height="1.100" fill="#fff"/><rect x="7.2" y="8.2" width="2.300" height="1.100" fill="#fff"/><rect x="1" y="10.2" width="2.300" height="1.100" fill="#fff"/><rect x="4.1" y="10.2" width="2.300" height="1.100" fill="#fff"/><rect x="7.2" y="10.2" width="2.300" height="1.100" fill="#fff"/></svg></div>
<div class="lbl" style="left:841px;top:634px">打印次数</div>
<div class="fld ln" style="left:935px;top:631px;height:22px;color:#606060;line-height:21px">0</div>


<div class="abs" style="left:1271px;top:254px;width:74px;height:22px;background:#fff;border:1px solid #d2d2d2"></div>
<svg class="abs" style="left:1271px;top:254px" width="74" height="21" viewBox="1271 255 74 21">
  <!-- copy -->
  <path d="M1276.500 259.500 H1282.500 L1284.500 261.500 V268.500 H1276.500 Z" fill="#e8f1fb" stroke="#4a6c9c" stroke-width="1"/>
  <path d="M1278 262.500 H1283 M1278 264.500 H1283 M1278 266.500 H1283" stroke="#7da2d0" stroke-width=".8"/>
  <path d="M1282.500 262.500 H1288.500 L1290.500 264.500 V271.500 H1282.500 Z" fill="#dfeaf8" stroke="#2f4f86" stroke-width="1.100"/>
  <path d="M1284 265.500 H1289 M1284 267.500 H1289 M1284 269.500 H1289" stroke="#4d7cc0" stroke-width=".9"/>
  <!-- paste -->
  <rect x="1301" y="260.500" width="11.500" height="11" rx="1" fill="#e3ae3a" stroke="#8a5f10" stroke-width="1"/>
  <rect x="1304" y="258.800" width="5.500" height="3" rx=".8" fill="#c9c2a8" stroke="#7a6a3a" stroke-width=".8"/>
  <rect x="1307.500" y="265.500" width="8" height="6.500" fill="#eef2f8" stroke="#4a4f5a" stroke-width="1.100"/>
  <path d="M1309 267.500 H1314 M1309 269.500 H1314" stroke="#8a94a8" stroke-width=".8"/>
  <!-- excel -->
  <path d="M1325.500 258.500 H1331.500 L1334.500 261.500 V269.500 H1325.500 Z" fill="#eaf2fb" stroke="#6a8fc0" stroke-width="1"/>
  <path d="M1328.500 260.500 V266 H1331 M1329.500 264.500 L1331.200 266 L1329.500 267.500" fill="none" stroke="#2f5fa8" stroke-width="1.100"/>
  <rect x="1331.500" y="263.500" width="8.500" height="8" fill="#2f8f3e" stroke="#175c22" stroke-width="1.100"/>
  <path d="M1333.500 265.500 L1338 270 M1338 265.500 L1333.500 270" stroke="#e9f7ea" stroke-width="1.400"/>
</svg>
<!-- bottom tooltip -->
<div class="abs" style="left:308px;top:706px;width:84px;height:22px;background:#fbfbfb;border:1px solid #b9b9b9;border-radius:3px;box-shadow:2px 2px 2px #444;font-size:12.500px;font-weight:300;line-height:22px;color:#a0a0a0;padding-left:5px;white-space:nowrap;letter-spacing:0">T+等3个会话</div>
<!-- left meter widget -->
<div class="abs" style="left:-3px;top:662px;width:9px;height:60px;background:#20262e;border:1px solid #0e1218;border-radius:3px"></div>
<div class="abs" style="left:0;top:684px;width:3px;height:34px;background:repeating-linear-gradient(transparent 0,transparent 1px,rgba(0,0,0,.0) 1px,rgba(0,0,0,0) 2px),linear-gradient(#d9a838,#c9c04a 40%,#4ab8a0 80%,#2f9fb0)"></div>
<div class="abs" style="left:0;top:666px;width:3px;height:18px;background:#3a4048"></div>
<div id="wmlayer" style="position:absolute;left:0;top:0;width:1363px;height:723px;overflow:hidden;z-index:5">
<div class="wm" style="left:30px;top:18px">电话：<b>400-665-0028</b></div>
<div class="wm" style="left:30px;top:47px">网址：<u>www.chanjet.net</u></div>
<div class="wm" style="left:30px;top:128px">电话：<b>400-665-0028</b></div>
<div class="wm" style="left:30px;top:157px">网址：<u>www.chanjet.net</u></div>
<div class="wm" style="left:30px;top:238px">电话：<b>400-665-0028</b></div>
<div class="wm" style="left:30px;top:267px">网址：<u>www.chanjet.net</u></div>
<div class="wm" style="left:30px;top:348px">电话：<b>400-665-0028</b></div>
<div class="wm" style="left:30px;top:377px">网址：<u>www.chanjet.net</u></div>
<div class="wm" style="left:30px;top:458px">电话：<b>400-665-0028</b></div>
<div class="wm" style="left:30px;top:487px">网址：<u>www.chanjet.net</u></div>
<div class="wm" style="left:30px;top:568px">电话：<b>400-665-0028</b></div>
<div class="wm" style="left:30px;top:597px">网址：<u>www.chanjet.net</u></div>
<div class="wm" style="left:30px;top:678px">电话：<b>400-665-0028</b></div>
<div class="wm" style="left:30px;top:707px">网址：<u>www.chanjet.net</u></div>
<div class="wm" style="left:301px;top:18px">电话：<b>400-665-0028</b></div>
<div class="wm" style="left:301px;top:47px">网址：<u>www.chanjet.net</u></div>
<div class="wm" style="left:301px;top:128px">电话：<b>400-665-0028</b></div>
<div class="wm" style="left:301px;top:157px">网址：<u>www.chanjet.net</u></div>
<div class="wm" style="left:301px;top:238px">电话：<b>400-665-0028</b></div>
<div class="wm" style="left:301px;top:267px">网址：<u>www.chanjet.net</u></div>
<div class="wm" style="left:301px;top:348px">电话：<b>400-665-0028</b></div>
<div class="wm" style="left:301px;top:377px">网址：<u>www.chanjet.net</u></div>
<div class="wm" style="left:301px;top:458px">电话：<b>400-665-0028</b></div>
<div class="wm" style="left:301px;top:487px">网址：<u>www.chanjet.net</u></div>
<div class="wm" style="left:301px;top:568px">电话：<b>400-665-0028</b></div>
<div class="wm" style="left:301px;top:597px">网址：<u>www.chanjet.net</u></div>
<div class="wm" style="left:301px;top:678px">电话：<b>400-665-0028</b></div>
<div class="wm" style="left:301px;top:707px">网址：<u>www.chanjet.net</u></div>
<div class="wm" style="left:572px;top:18px">电话：<b>400-665-0028</b></div>
<div class="wm" style="left:572px;top:47px">网址：<u>www.chanjet.net</u></div>
<div class="wm" style="left:572px;top:128px">电话：<b>400-665-0028</b></div>
<div class="wm" style="left:572px;top:157px">网址：<u>www.chanjet.net</u></div>
<div class="wm" style="left:572px;top:238px">电话：<b>400-665-0028</b></div>
<div class="wm" style="left:572px;top:267px">网址：<u>www.chanjet.net</u></div>
<div class="wm" style="left:572px;top:348px">电话：<b>400-665-0028</b></div>
<div class="wm" style="left:572px;top:377px">网址：<u>www.chanjet.net</u></div>
<div class="wm" style="left:572px;top:458px">电话：<b>400-665-0028</b></div>
<div class="wm" style="left:572px;top:487px">网址：<u>www.chanjet.net</u></div>
<div class="wm" style="left:572px;top:568px">电话：<b>400-665-0028</b></div>
<div class="wm" style="left:572px;top:597px">网址：<u>www.chanjet.net</u></div>
<div class="wm" style="left:572px;top:678px">电话：<b>400-665-0028</b></div>
<div class="wm" style="left:572px;top:707px">网址：<u>www.chanjet.net</u></div>
<div class="wm" style="left:843px;top:18px">电话：<b>400-665-0028</b></div>
<div class="wm" style="left:843px;top:47px">网址：<u>www.chanjet.net</u></div>
<div class="wm" style="left:843px;top:128px">电话：<b>400-665-0028</b></div>
<div class="wm" style="left:843px;top:157px">网址：<u>www.chanjet.net</u></div>
<div class="wm" style="left:843px;top:238px">电话：<b>400-665-0028</b></div>
<div class="wm" style="left:843px;top:267px">网址：<u>www.chanjet.net</u></div>
<div class="wm" style="left:843px;top:348px">电话：<b>400-665-0028</b></div>
<div class="wm" style="left:843px;top:377px">网址：<u>www.chanjet.net</u></div>
<div class="wm" style="left:843px;top:458px">电话：<b>400-665-0028</b></div>
<div class="wm" style="left:843px;top:487px">网址：<u>www.chanjet.net</u></div>
<div class="wm" style="left:843px;top:568px">电话：<b>400-665-0028</b></div>
<div class="wm" style="left:843px;top:597px">网址：<u>www.chanjet.net</u></div>
<div class="wm" style="left:843px;top:678px">电话：<b>400-665-0028</b></div>
<div class="wm" style="left:843px;top:707px">网址：<u>www.chanjet.net</u></div>
<div class="wm" style="left:1114px;top:18px">电话：<b>400-665-0028</b></div>
<div class="wm" style="left:1114px;top:47px">网址：<u>www.chanjet.net</u></div>
<div class="wm" style="left:1114px;top:128px">电话：<b>400-665-0028</b></div>
<div class="wm" style="left:1114px;top:157px">网址：<u>www.chanjet.net</u></div>
<div class="wm" style="left:1114px;top:238px">电话：<b>400-665-0028</b></div>
<div class="wm" style="left:1114px;top:267px">网址：<u>www.chanjet.net</u></div>
<div class="wm" style="left:1114px;top:348px">电话：<b>400-665-0028</b></div>
<div class="wm" style="left:1114px;top:377px">网址：<u>www.chanjet.net</u></div>
<div class="wm" style="left:1114px;top:458px">电话：<b>400-665-0028</b></div>
<div class="wm" style="left:1114px;top:487px">网址：<u>www.chanjet.net</u></div>
<div class="wm" style="left:1114px;top:568px">电话：<b>400-665-0028</b></div>
<div class="wm" style="left:1114px;top:597px">网址：<u>www.chanjet.net</u></div>
<div class="wm" style="left:1114px;top:678px">电话：<b>400-665-0028</b></div>
<div class="wm" style="left:1114px;top:707px">网址：<u>www.chanjet.net</u></div>
</div>
</body>
</html>
